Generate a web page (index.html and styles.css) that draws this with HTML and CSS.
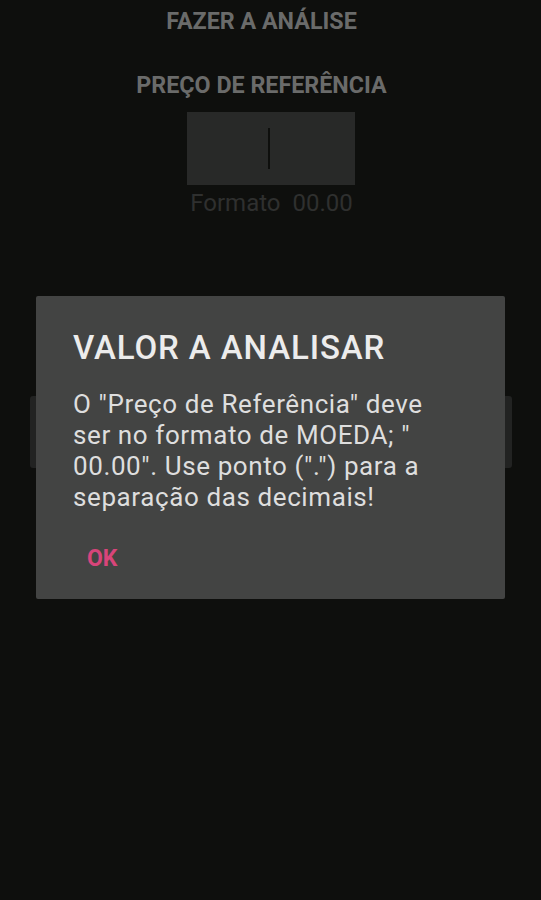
FILE: index.html
```html
<!DOCTYPE html>
<html lang="pt">
<head>
	<meta charset="utf-8">
	<title>Fazer a análise</title>
	<link rel="stylesheet" href="styles.css">
</head>
<body>
	<div class="screen">
		<h1 class="title">FAZER A ANÁLISE</h1>
		<h2 class="label">PREÇO DE REFERÊNCIA</h2>
		<div class="field"><span class="cursor"></span></div>
		<p class="hint">Formato&nbsp; 00.00</p>
		<div class="button"></div>
	</div>

	<div class="dialog">
		<h3 class="dialog-title">VALOR A ANALISAR</h3>
		<p class="dialog-text">O "Preço de Referência" deve ser no formato de MOEDA; " 00.00". Use ponto (".") para a separação das decimais!</p>
		<div class="dialog-actions"><span class="ok">OK</span></div>
	</div>
</body>
</html>
```

FILE: styles.css
```css
* {padding: 0; margin: 0; border: 0;}
html, body {
	width: 541px;
	height: 900px;
	background: #0e0f0d;
	font-family: Roboto, "Liberation Sans", sans-serif;
	overflow: hidden;
}
.screen {
	display: flex;
	flex-direction: column;
	align-items: center;
	padding-top: 6px;
}
.title {
	font-size: 23.3px;
	font-weight: bold;
	color: #6a6b6a;
	line-height: 30px;
	margin-right: 18px;
}
.label {
	margin-top: 34px;
	margin-right: 18px;
	font-size: 23.3px;
	font-weight: bold;
	color: #6a6b6a;
	line-height: 30px;
}
.field {
	margin-top: 12px;
	width: 168px;
	height: 73px;
	margin-left: 1px;
	background: #282928;
	display: flex;
	align-items: center;
	justify-content: center;
}
.cursor {
	width: 2px;
	height: 41px;
	background: #0e0f0d;
	margin-left: -4px;
}
.hint {
	margin-top: 3px;
	font-size: 24px;
	color: #2f302f;
	line-height: 30px;
	margin-left: 2px;
}
.button {
	margin-top: 178px;
	width: 482px;
	height: 72px;
	background: #222322;
	border-radius: 3px;
	margin-left: 1px;
}
.dialog {
	position: absolute;
	left: 36px;
	top: 296px;
	width: 469px;
	height: 303px;
	box-sizing: border-box;
	padding: 30px 37px 0;
	background: #434443;
	border-radius: 2px;
}
.dialog-title {
	font-size: 33px;
	font-weight: 500;
	letter-spacing: 0.9px;
	color: #ececec;
	line-height: 44px;
}
.dialog-text {
	margin-top: 19px;
	font-size: 26px;
	letter-spacing: 0.6px;
	color: #dedede;
	line-height: 31px;
	width: 370px;
}
.dialog-actions {
	margin-top: 32px;
	padding-left: 14px;
}
.ok {
	font-size: 23px;
	font-weight: bold;
	color: #d8457a;
}
```
